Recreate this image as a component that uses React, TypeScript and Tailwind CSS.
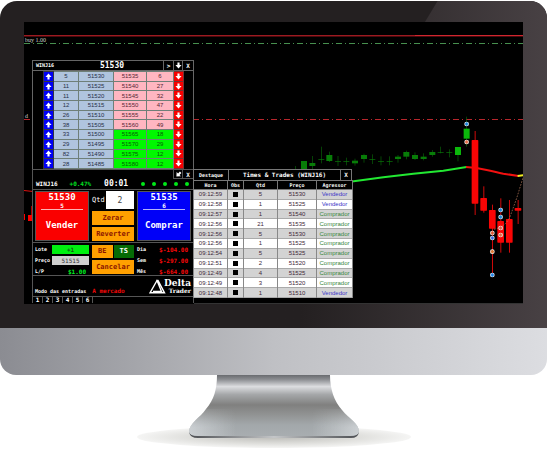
import React from "react";

const book = [
  [5, 51530, 51535, 6],
  [11, 51525, 51540, 27],
  [11, 51520, 51545, 32],
  [12, 51515, 51550, 47],
  [26, 51510, 51555, 22],
  [38, 51505, 51560, 49],
  [33, 51500, 51565, 18],
  [29, 51495, 51570, 29],
  [82, 51490, 51575, 12],
  [28, 51485, 51580, 12],
];

const trades: [string, number, number, string][] = [
  ["09:12:59", 5, 51530, "Vendedor"],
  ["09:12:58", 1, 51525, "Vendedor"],
  ["09:12:57", 1, 51540, "Comprador"],
  ["09:12:56", 21, 51535, "Comprador"],
  ["09:12:56", 5, 51530, "Comprador"],
  ["09:12:56", 1, 51525, "Comprador"],
  ["09:12:54", 5, 51525, "Comprador"],
  ["09:12:51", 2, 51520, "Comprador"],
  ["09:12:49", 4, 51525, "Comprador"],
  ["09:12:49", 3, 51520, "Comprador"],
  ["09:12:48", 1, 51510, "Vendedor"],
];

// center, wick top, wick bottom, body top, body bottom
const rising = [
  [16, 168, 182, 178, 182],
  [42, 153, 180, 153, 180],
  [67, 138, 180, 159, 168],
  [94, 110, 160, 147, 149],
  [118, 125, 156, 135, 153],
  [144, 138, 168, 153, 155],
  [169, 143, 166, 153, 155],
  [195, 146, 167, 152, 160],
  [222, 131, 158, 135, 147],
  [247, 133, 162, 147, 149],
  [273, 139, 166, 153, 155],
  [299, 139, 166, 153, 155],
  [324, 135, 158, 140, 147],
  [349, 122, 148, 126, 140],
  [375, 127, 150, 135, 147],
  [401, 130, 151, 140, 147],
  [427, 120, 140, 126, 135],
  [452, 110, 130, 126, 128],
  [478, 118, 142, 127, 129],
  [504, 111, 154, 111, 135],
  [530, 20, 110, 56, 86],
];

const falling = [
  [555, 63, 315, 90, 281],
  [581, 229, 308, 264, 302],
  [607, 284, 500, 300, 356],
  [632, 265, 428, 333, 398],
  [658, 270, 428, 327, 398],
  [684, 270, 342, 294, 302],
];

const markers: [number, number, string][] = [
  [530, 42, "#1d84d8"],
  [530, 96, "#e06a45"],
  [607, 369, "#e05a35"],
  [607, 384, "#3c6fe0"],
  [607, 425, "#e07a35"],
  [607, 495, "#1d84e8"],
  [632, 300, "#1d84d8"],
  [632, 321, "#1d84d8"],
  [632, 354, "#e05a45"],
  [632, 375, "#e06a45"],
];

function Arrow({ dir }: { dir: "up" | "down" | "corner" }) {
  const turn = dir === "up" ? 180 : dir === "corner" ? 45 : 0;
  return (
    <svg viewBox="0 0 8 8" className="mx-auto block size-[7px]" aria-hidden="true">
      <path
        d="M2.8 0.5h2.4v3h2.3L4 7.4 0.5 3.5H2.8z"
        fill="#fff"
        transform={`rotate(${turn} 4 4)`}
      />
    </svg>
  );
}

function Chart() {
  return (
    <svg viewBox="24 22 499 282" preserveAspectRatio="xMinYMin meet" className="block h-full w-full" aria-hidden="true">
      <rect x="24" y="35" width="499" height="1" fill="#9c1a20" />
      <rect x="415" y="35" width="108" height="1" fill="#d0262e" />
      <rect x="24" y="36" width="499" height="1" fill="#4a0a0e" />
      <path d="M24 43.5H523" stroke="#47904f" strokeDasharray="6 3 1 3" />
      <path d="M24 119.5H523" stroke="#b8262c" strokeDasharray="6 3 1 3" />
      <path d="M24 190.5l9 1" stroke="#e01010" />
      <rect x="24" y="214" width="1" height="6" fill="#f00" />
      <rect x="28" y="215" width="5" height="6" fill="#f00" />
      <path d="M31.5 206v9" stroke="#a00" />
      <path d="M194 303.5H523" stroke="#333" />
      <g transform="translate(290 110) scale(0.3333)">
        {rising.map(([x, wt, wb, bt, bb]) => (
          <g key={x} fill={x > 500 ? "#0bb80b" : "#087c08"}>
            <rect x={x - 1} y={wt} width="2" height={wb - wt} fill="#086408" />
            <rect x={x - 9} y={bt} width="18" height={bb - bt} />
          </g>
        ))}
        <g fill="none" strokeWidth="6">
          <path d="M180 215L280 202L370 191L460 182L530 171" stroke="#22e832" />
          <path d="M528 171Q560 173 590 180T640 191L686 198" stroke="#f21010" />
          <path d="M683 198L700 196" stroke="#f5ee20" />
        </g>
        {falling.map(([x, wt, wb, bt, bb]) => (
          <g key={x} fill="#f90505">
            <rect x={x - 1} y={wt} width="3" height={wb - wt} fill="#d00a0a" />
            <rect x={x - 10} y={bt} width="20" height={bb - bt} rx="2" />
          </g>
        ))}
        <path d="M612 358Q650 350 662 315L680 265L700 200" fill="none" stroke="#c08060" strokeWidth="2" strokeDasharray="5 4" />
        {markers.map(([x, y, color]) => (
          <g key={`${x}-${y}`}>
            <circle cx={x} cy={y} r="7" fill="#f4f4f4" />
            <path d={`M${x - 5} ${y}h10M${x} ${y - 5}v10`} stroke={color} strokeWidth="5" />
          </g>
        ))}
      </g>
    </svg>
  );
}

function BookWindow() {
  const cell = "border border-[#6f7f78] p-0 text-center";
  return (
    <section className="absolute top-[38px] left-[8px] w-[162px] border border-[#666] bg-black">
      <header className="grid h-[10px] grid-cols-[28px_1fr_10px_9px_11px] items-stretch border-b border-[#666] font-['DejaVu_Sans_Mono',monospace] leading-[9px] font-bold text-white">
        <span className="pl-[3px] text-[5px]">WINJ16</span>
        <h2 className="text-center text-[8px]">51530</h2>
        <button type="button" className="border-l border-[#666] text-[6px]">&gt;</button>
        <button type="button" aria-label="Descer" className="border-l border-[#666]"><Arrow dir="down" /></button>
        <button type="button" className="border-l border-[#666] text-[6px]">X</button>
      </header>
      <table className="ml-[10px] h-[98px] w-[140px] table-fixed border-collapse text-[6px] leading-[8px] text-[#26304a]">
        <colgroup>
          <col className="w-[10px]" />
          <col className="w-[25px]" />
          <col className="w-[35px]" />
          <col className="w-[33px]" />
          <col className="w-[27px]" />
          <col className="w-[10px]" />
        </colgroup>
        <tbody>
          {book.map(([bq, bid, ask, aq], i) => {
            const side = i < 6 ? "bg-[#ffb6c1] text-[#552836]" : "bg-[#00f800] text-[#075c07]";
            return (
              <tr key={bid}>
                <td className="border border-[#334] bg-[#0000f5] p-0"><Arrow dir="up" /></td>
                <td className={`${cell} bg-[#b0c4de]`}>{bq}</td>
                <td className={`${cell} bg-[#b0c4de]`}>{bid}</td>
                <td className={`${cell} ${side}`}>{ask}</td>
                <td className={`${cell} ${side}`}>{aq}</td>
                <td className="border border-[#733] bg-[#f80000] p-0"><Arrow dir="down" /></td>
              </tr>
            );
          })}
        </tbody>
      </table>
    </section>
  );
}

function Side({ price, qty, label, color }: { price: number; qty: number; label: string; color: string }) {
  return (
    <button type="button" className={`flex h-[50px] flex-col items-center border border-[#555] font-bold text-white ${color}`}>
      <span className="text-[9px] leading-[10px]">{price}</span>
      <span className="w-[42px] border-b border-white/70 text-[6px] leading-[7px]">{qty}</span>
      <span className="pt-[9px] text-[9px] leading-[12px]">{label}</span>
    </button>
  );
}

function OrderWindow() {
  const orange = "bg-[#ffa000] text-[#8b1500] font-bold text-[7px]";
  return (
    <section className="absolute top-[147px] left-[8px] w-[162px] border border-b-0 border-[#555] bg-black font-['DejaVu_Sans_Mono',monospace] text-white">
      <div className="flex h-[9px] justify-end text-[6px] leading-[9px] font-bold">
        <button type="button" aria-label="Recolher" className="w-[9px] border-b border-l border-[#555]"><Arrow dir="corner" /></button>
        <button type="button" className="w-[11px] border-b border-l border-[#555]">X</button>
      </div>
      <header className="flex h-[11px] items-center justify-between border-b border-[#555] pr-[4px] pl-[3px] text-[6px] leading-[10px] font-bold">
        <span>WINJ16</span>
        <span className="pl-[7px] text-[#00e020]">+0.47%</span>
        <span className="px-[8px] text-[8px]">00:01</span>
        <span className="flex gap-[7px]">
          {[0, 1, 2, 3, 4].map((n) => (
            <i key={n} className="size-[4px] rounded-full bg-[#00e818]" />
          ))}
        </span>
      </header>
      <div className="grid h-[53px] grid-cols-[54px_1fr_54px] gap-[3px] border-b border-[#555] px-[2px] pt-px">
        <Side price={51530} qty={5} label="Vender" color="bg-[#fa0000]" />
        <div className="flex flex-col gap-[2px]">
          <div className="flex h-[18px] items-center justify-between">
            <label htmlFor="qtd" className="text-[7px]">Qtd</label>
            <input id="qtd" defaultValue="2" className="h-[18px] w-[28px] bg-white text-center text-[8px] text-[#444]" />
          </div>
          <button type="button" className={`h-[14px] leading-[14px] ${orange}`}>Zerar</button>
          <button type="button" className={`h-[14px] leading-[14px] ${orange}`}>Reverter</button>
        </div>
        <Side price={51535} qty={6} label="Comprar" color="bg-[#0000f8]" />
      </div>
      <div className="grid h-[33px] grid-cols-[54px_1fr_54px] gap-[3px] border-b border-[#555] px-[2px] pt-[2px] text-[6px] leading-[9px] font-bold">
        <div className="flex flex-col gap-[2px]">
          <div className="flex justify-between">
            <label htmlFor="lote" className="text-[5px]">Lote</label>
            <input id="lote" defaultValue="+1" className="h-[9px] w-[37px] bg-[#00f010] text-center text-[#175c17]" />
          </div>
          <div className="flex justify-between">
            <label htmlFor="preco" className="text-[5px]">Preço</label>
            <input id="preco" defaultValue="51515" className="h-[9px] w-[37px] bg-[#d0d0d0] text-center font-normal text-[#333]" />
          </div>
          <div className="flex justify-between pr-[3px]">
            <span className="text-[5px]">L/P</span>
            <span className="text-[#00f020]">$1.00</span>
          </div>
        </div>
        <div className="flex flex-col gap-[2px]">
          <div className="flex h-[13px] gap-px text-[7px]">
            <button type="button" className={`flex-1 ${orange}`}>BE</button>
            <button type="button" className="flex-1 bg-[#056b05]">TS</button>
          </div>
          <button type="button" className={`h-[14px] leading-[14px] ${orange}`}>Cancelar</button>
        </div>
        <dl className="flex flex-col gap-[2px] pr-[3px]">
          {[["Dia", "$-104.00"], ["Sem", "$-297.00"], ["Mês", "$-664.00"]].map(([k, v]) => (
            <div key={k} className="flex justify-between">
              <dt className="text-[5px]">{k}</dt>
              <dd className="text-[#f80808]">{v}</dd>
            </div>
          ))}
        </dl>
      </div>
      <div className="flex h-[21px] items-end justify-between border-b border-[#555] px-[2px]">
        <p className="pb-px text-[5px] leading-[8px] font-bold whitespace-nowrap">
          Modo das entradas <span className="pl-[3px] text-[6px] text-[#f00808]">A mercado</span>
        </p>
        <div className="flex items-center pb-[2px]">
          <svg viewBox="0 0 17 15" className="h-[15px] w-[17px]" aria-hidden="true">
            <path d="M8 1.5L1 13.8H15.5L9 1.5L8 1.5L12.5 12.5H4" fill="none" stroke="#fff" strokeWidth="1.4" />
          </svg>
          <p className="-ml-[2px] flex flex-col items-end font-['DejaVu_Serif',serif] leading-[8px] font-bold">
            <span className="text-[9px]">Delta</span>
            <span className="text-[6px] leading-[7px]">Trader</span>
          </p>
        </div>
      </div>
      <nav className="flex h-[6px] text-[6px] leading-[6px] font-bold">
        {[1, 2, 3, 4, 5, 6].map((n) => (
          <button key={n} type="button" className="w-[10px] border-r border-[#555]">{n}</button>
        ))}
      </nav>
    </section>
  );
}

function TradesWindow() {
  const th = "border border-[#777] p-0 font-bold";
  const td = "border-x border-[#888] p-0";
  return (
    <section className="absolute top-[147px] left-[169px] w-[159px] bg-black">
      <header className="grid h-[11px] grid-cols-[34px_1fr_11px] border border-b-0 border-[#777] text-center font-['DejaVu_Sans_Mono',monospace] text-[6px] leading-[10px] font-bold text-white">
        <span className="text-[5px]">Destaque</span>
        <h2 className="border-l border-[#777]">Times &amp; Trades (WINJ16)</h2>
        <button type="button" className="border-l border-[#777]">X</button>
      </header>
      <table className="h-[118px] w-full table-fixed border-collapse text-center text-[6px] leading-[8px]">
        <colgroup>
          <col className="w-[34px]" />
          <col className="w-[16px]" />
          <col className="w-[34px]" />
          <col className="w-[39px]" />
          <col className="w-[36px]" />
        </colgroup>
        <thead className="font-['DejaVu_Sans_Mono',monospace] text-[5px] text-white">
          <tr>
            <th className={th}>Hora</th>
            <th className={th}>Obs</th>
            <th className={th}>Qtd</th>
            <th className={th}>Preço</th>
            <th className={th}>Agressor</th>
          </tr>
        </thead>
        <tbody className="text-[#402838]">
          {trades.map(([time, qty, price, who], i) => (
            <tr key={i} className={`border-b border-[#aaa] ${i % 2 ? "bg-white" : "bg-[#d3d3d3]"}`}>
              <td className={td}>{time}</td>
              <td className={td}><i className="mx-auto block size-[5px] bg-black" /></td>
              <td className={td}>{qty}</td>
              <td className={td}>{price}</td>
              <td className={`${td} ${who === "Vendedor" ? "text-[#4038c8]" : "text-[#38853c]"}`}>{who}</td>
            </tr>
          ))}
        </tbody>
      </table>
    </section>
  );
}

function Stand() {
  return (
    <svg viewBox="0 0 276 75" className="mx-auto block h-[75px] w-[276px]" aria-hidden="true">
      <defs>
        <radialGradient id="shade">
          <stop offset="0" stopColor="#bcbcb8" />
          <stop offset="0.6" stopColor="#dededb" />
          <stop offset="1" stopColor="#f5f5f4" />
        </radialGradient>
        <linearGradient id="metal" x2="0" y2="1">
          <stop offset="0" stopColor="#696b6f" />
          <stop offset="0.07" stopColor="#898b8f" />
          <stop offset="0.19" stopColor="#dcdde0" />
          <stop offset="0.32" stopColor="#a5a7a9" />
          <stop offset="0.49" stopColor="#80807f" />
          <stop offset="0.65" stopColor="#919393" />
          <stop offset="0.82" stopColor="#a3a8ab" />
          <stop offset="1" stopColor="#a8adb0" />
        </linearGradient>
        <linearGradient id="sheen">
          <stop offset="0" stopColor="#d5d9dc" stopOpacity="0.8" />
          <stop offset="0.28" stopColor="#d5d9dc" stopOpacity="0" />
          <stop offset="0.72" stopColor="#d5d9dc" stopOpacity="0" />
          <stop offset="1" stopColor="#d5d9dc" stopOpacity="0.8" />
        </linearGradient>
        <linearGradient id="fade" x2="0" y2="1">
          <stop offset="0" stopColor="#000" />
          <stop offset="0.7" stopColor="#fff" />
        </linearGradient>
        <mask id="lower">
          <rect x="50" y="30" width="176" height="32" fill="url(#fade)" />
        </mask>
        <linearGradient id="lip">
          <stop offset="0" stopColor="#4c4e52" />
          <stop offset="0.5" stopColor="#c4c6c8" />
          <stop offset="1" stopColor="#4c4e52" />
        </linearGradient>
      </defs>
      <ellipse cx="138" cy="62" rx="137" ry="11" fill="url(#shade)" />
      <path d="M53 57Q54 63 62 63H215Q222 63 223 57L215 60H62Z" fill="url(#lip)" />
      <path d="M81 0H194C194 14 198 26 206 35C213 44 223 48 223 57Q222 61 214 61H62Q54 61 53 57C53 48 64 43 70 34C78 25 81 14 81 0Z" fill="url(#metal)" />
      <path d="M70 34H206C213 44 223 48 223 57Q222 61 214 61H62Q54 61 53 57C53 48 64 43 70 34Z" fill="url(#sheen)" mask="url(#lower)" />
    </svg>
  );
}

export default function App() {
  return (
    <main className="bg-white pt-px pr-px font-['Liberation_Sans',Arial,sans-serif]">
      <div className="relative rounded-t-[17px] bg-[#242021] pt-[21px] pr-[24px] pb-[24px] pl-[24px]">
        <div className="absolute inset-0 rounded-tr-[17px] bg-linear-to-r from-[#242021] from-55% to-[#484144] [clip-path:polygon(80%_0,100%_0,100%_100%,44%_100%)]" />
        <div className="relative h-[282px] overflow-hidden bg-black">
          <Chart />
          <span className="absolute top-[14px] left-px font-['Liberation_Serif',serif] text-[6px] leading-[8px] text-[#ccc]">buy 1.00</span>
          <span className="absolute top-[90px] left-px font-['Liberation_Serif',serif] text-[6px] leading-[8px] text-[#ccc]">d</span>
          <BookWindow />
          <OrderWindow />
          <TradesWindow />
        </div>
      </div>
      <div className="h-[47px] rounded-b-[16px] bg-linear-to-r from-[#8b8c92] via-[#bfc0c4] to-[#dcdde1]" />
      <Stand />
    </main>
  );
}
